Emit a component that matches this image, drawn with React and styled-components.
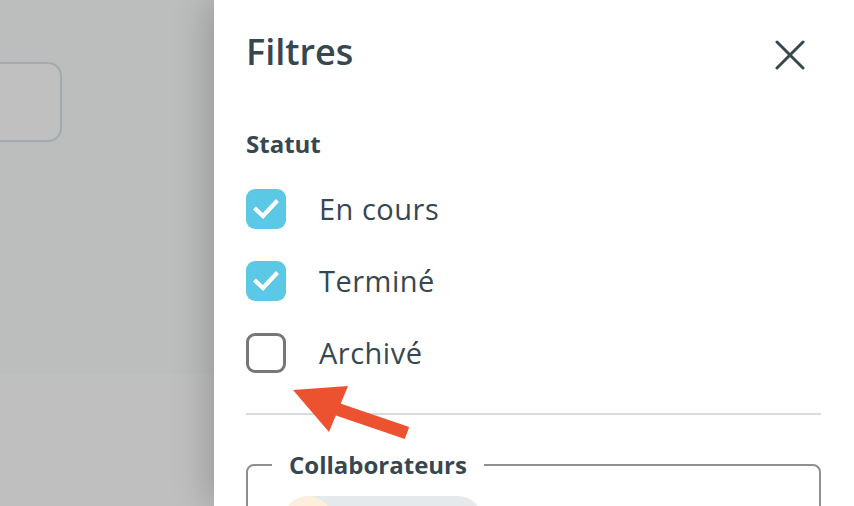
import React, { useState } from 'react';
import styled, { createGlobalStyle } from 'styled-components';

const GlobalStyle = createGlobalStyle`
  html, body {
    margin: 0;
    padding: 0;
    background: #bcbebd;
  }
  body {
    font-family: "Open Sans", "Noto Sans", sans-serif;
    color: #37474f;
  }
  * { box-sizing: border-box; }
`;

const statuses = [
  { id: 'encours', label: 'En cours', checked: true },
  { id: 'termine', label: 'Terminé', checked: true },
  { id: 'archive', label: 'Archivé', checked: false },
];

export default function App() {
  const [items, setItems] = useState(statuses);

  function toggle(id) {
    setItems(items.map(it => (it.id === id ? { ...it, checked: !it.checked } : it)));
  }

  return (
    <>
      <GlobalStyle />
      <Screen>
        <Backdrop>
          <BackdropTop>
            <FakeInput />
          </BackdropTop>
          <BackdropBottom />
        </Backdrop>
        <Drawer>
          <Header>
            <Title>Filtres</Title>
            <CloseButton aria-label="Fermer">
              <svg width="30" height="30" viewBox="0 0 30 30" fill="none">
                <path d="M2 2 L28 28 M28 2 L2 28" stroke="#37474f" strokeWidth="3" strokeLinecap="round" />
              </svg>
            </CloseButton>
          </Header>
          <SectionTitle>Statut</SectionTitle>
          <CheckList>
            {items.map(it => (
              <CheckRow key={it.id} onClick={() => toggle(it.id)}>
                <Box $checked={it.checked}>
                  {it.checked && (
                    <svg width="40" height="40" viewBox="0 0 40 40" fill="none">
                      <path d="M10 20.5 L17 27 L30 13" stroke="#fff" strokeWidth="4.2" strokeLinecap="square" />
                    </svg>
                  )}
                </Box>
                <CheckLabel>{it.label}</CheckLabel>
              </CheckRow>
            ))}
          </CheckList>
          <Divider />
          <Fieldset>
            <Legend>Collaborateurs</Legend>
            <Chip>
              <Avatar />
            </Chip>
          </Fieldset>
          <Arrow width="140" height="70" viewBox="0 0 140 70">
            <polygon points="13,15 68,11 49,57" fill="#ec5230" />
            <polygon points="47.2,23.9 129.2,51.9 124.8,64.1 42.8,36.1" fill="#ec5230" />
          </Arrow>
        </Drawer>
      </Screen>
    </>
  );
}

const Screen = styled.div`
  display: flex;
  width: 854px;
  height: 506px;
  overflow: hidden;
`;

const Backdrop = styled.div`
  width: 214px;
  flex-shrink: 0;
  display: flex;
  flex-direction: column;
`;

const BackdropTop = styled.div`
  height: 374px;
  background: #bcbebd;
  padding-top: 62px;
`;

const BackdropBottom = styled.div`
  flex: 1;
  background: #bfbfbf;
`;

const FakeInput = styled.div`
  width: 82px;
  height: 80px;
  margin-left: -20px;
  border: 2px solid #a3aaae;
  border-radius: 14px;
  background: #c0c0c0;
`;

const Drawer = styled.div`
  position: relative;
  flex: 1;
  background: #fff;
  padding: 29px 32px 0 32px;
  box-shadow: -6px 0 34px rgba(0, 0, 0, 0.2);
`;

const Header = styled.div`
  display: flex;
  align-items: center;
  justify-content: space-between;
  height: 46px;
`;

const Title = styled.h1`
  margin: 0;
  font-size: 36px;
  font-weight: 600;
  line-height: 46px;
  color: #37474f;
`;

const CloseButton = styled.button`
  border: none;
  background: none;
  padding: 0;
  margin-right: 17px;
  margin-top: 6px;
  width: 30px;
  height: 30px;
  display: flex;
  cursor: pointer;
`;

const SectionTitle = styled.h2`
  margin: 54px 0 0;
  font-size: 24px;
  font-weight: 700;
  line-height: 30px;
  color: #37474f;
`;

const CheckList = styled.div`
  display: flex;
  flex-direction: column;
  gap: 32px;
  margin-top: 30px;
`;

const CheckRow = styled.label`
  display: flex;
  align-items: center;
  gap: 33px;
  cursor: pointer;
`;

const Box = styled.span`
  width: 40px;
  height: 40px;
  border-radius: 9px;
  display: flex;
  align-items: center;
  justify-content: center;
  background: ${({ $checked }) => ($checked ? '#5bc8e6' : '#fff')};
  border: ${({ $checked }) => ($checked ? 'none' : '3px solid #777')};
`;

const CheckLabel = styled.span`
  font-size: 29px;
  letter-spacing: 0.5px;
  line-height: 40px;
  color: #37474f;
`;

const Divider = styled.hr`
  border: none;
  border-top: 2px solid #d5dde3;
  margin: 40px 0 0;
  width: 575px;
`;

const Fieldset = styled.fieldset`
  margin: 34px 0 0;
  width: 575px;
  border: 2px solid #8f8f8f;
  border-radius: 8px;
  padding: 0 24px 20px 36px;
`;

const Legend = styled.legend`
  padding: 0 17px;
  margin-left: -12px;
  font-size: 24px;
  font-weight: 700;
  line-height: 32px;
  color: #37474f;
`;

const Chip = styled.div`
  margin-top: 15px;
  width: 198px;
  height: 48px;
  border-radius: 24px;
  background: #e5e9ec;
  display: flex;
  align-items: center;
`;

const Avatar = styled.span`
  width: 48px;
  height: 48px;
  border-radius: 50%;
  background: #fdefdb;
`;

const Arrow = styled.svg`
  position: absolute;
  left: 66px;
  top: 375px;
`;
